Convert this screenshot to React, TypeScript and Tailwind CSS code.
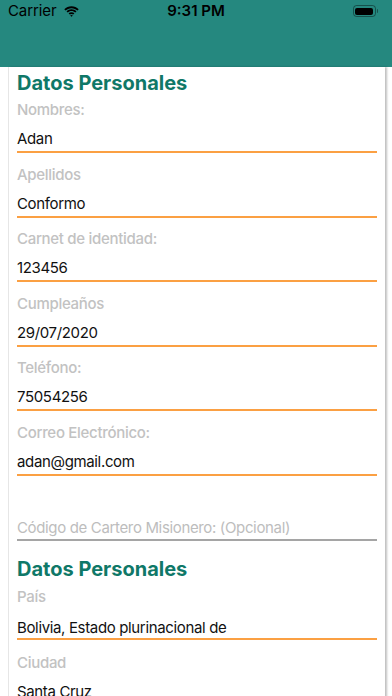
import React from "react";

type Field = { label: string; value: string };

const personal: Field[] = [
  { label: "Nombres:", value: "Adan" },
  { label: "Apellidos", value: "Conformo" },
  { label: "Carnet de identidad:", value: "123456" },
  { label: "Cumpleaños", value: "29/07/2020" },
  { label: "Teléfono:", value: "75054256" },
  { label: "Correo Electrónico:", value: "adan@gmail.com" },
];

const font = { fontFamily: "Inter, 'Noto Sans', sans-serif" };

function StatusBar() {
  return (
    <div className="relative flex h-[22px] items-center px-2 text-[15px] text-black">
      <span className="tracking-[-0.1px]">Carrier</span>
      <svg className="ml-[8px]" width="15" height="11" viewBox="0 0 15 11">
        <path d="M7.5 2.2c2.3 0 4.4.9 6 2.4l1.2-1.3C12.8 1.4 10.3.3 7.5.3S2.2 1.4.3 3.3l1.2 1.3c1.6-1.5 3.7-2.4 6-2.4z" fill="#000" />
        <path d="M7.5 5.1c1.5 0 2.8.6 3.8 1.5l1.2-1.3C11.2 4 9.4 3.3 7.5 3.3S3.8 4 2.5 5.3l1.2 1.3c1-.9 2.3-1.5 3.8-1.5z" fill="#000" />
        <path d="M7.5 7.9c.7 0 1.3.3 1.7.7l1.2-1.3c-.8-.7-1.8-1.1-2.9-1.1s-2.1.4-2.9 1.1l1.2 1.3c.4-.4 1-.7 1.7-.7zM7.5 10.8l1.3-1.4c-.3-.3-.8-.5-1.3-.5s-1 .2-1.3.5z" fill="#000" />
      </svg>
      <span className="absolute left-1/2 -translate-x-1/2 font-semibold">9:31 PM</span>
      <div className="ml-auto mr-[6px] flex items-center">
        <div className="flex h-[12px] w-[23px] items-center rounded-[3.5px] border border-black/40 p-[1.5px]">
          <div className="h-full w-full rounded-[2px] bg-black" />
        </div>
        <div className="ml-[1px] h-[4px] w-[1.5px] rounded-r-sm bg-black/40" />
      </div>
    </div>
  );
}

function FieldRow({ label, value }: Field) {
  return (
    <div className="mb-[11.6px] flex flex-col">
      <div className="h-[20px] text-[15px] leading-[20px] font-medium tracking-[-0.3px] text-[#c2c2c2]">{label}</div>
      <div className="mt-[9px] h-[20px] text-[15px] leading-[20px] tracking-[-0.35px] text-[#111]">{value}</div>
      <div className="mt-[2px] h-[2px] bg-[#fba043]" />
    </div>
  );
}

export default function App() {
  return (
    <div className="h-[696px] w-[392px] overflow-hidden bg-white" style={font}>
      <header className="h-[67px] bg-[#25887f]">
        <StatusBar />
      </header>
      <div className="ml-[8px] flex w-[377px] flex-col border-l border-[#e6e6e6] bg-white pr-[8px] pl-[8px] shadow-[2px_0_2px_rgba(0,0,0,0.25)]">
        <h2 className="pt-[4px] text-[20px] leading-[24px] font-bold text-[#0f7868]">Datos Personales</h2>
        <div className="mt-[5px] flex flex-col">
          {personal.map(f => (
            <FieldRow key={f.label} {...f} />
          ))}
        </div>
        <div className="mt-[30.4px] flex flex-col">
          <div className="h-[20px] text-[15px] leading-[20px] tracking-[-0.35px] text-[#bdbdbd]">
            Código de Cartero Misionero: (Opcional)
          </div>
          <div className="mt-[1px] h-[2px] bg-[#a5a5a5]" />
        </div>
        <h2 className="mt-[16px] text-[20px] leading-[24px] font-bold text-[#0f7868]">Datos Personales</h2>
        <div className="mt-[6px] flex flex-col">
          <div className="h-[20px] text-[15px] leading-[20px] font-medium tracking-[-0.3px] text-[#c2c2c2]">País</div>
          <div className="mt-[11px] h-[20px] text-[15px] leading-[20px] tracking-[-0.35px] text-[#111]">
            Bolivia, Estado plurinacional de
          </div>
          <div className="mt-[0px] h-[2px] bg-[#fba043]" />
        </div>
        <div className="mt-[13px] flex flex-col">
          <div className="h-[20px] text-[15px] leading-[20px] font-medium tracking-[-0.3px] text-[#c2c2c2]">Ciudad</div>
          <div className="mt-[9px] h-[20px] text-[15px] leading-[20px] tracking-[-0.35px] text-[#111]">Santa Cruz</div>
          <div className="mt-[2px] h-[2px] bg-[#fba043]" />
        </div>
      </div>
    </div>
  );
}
